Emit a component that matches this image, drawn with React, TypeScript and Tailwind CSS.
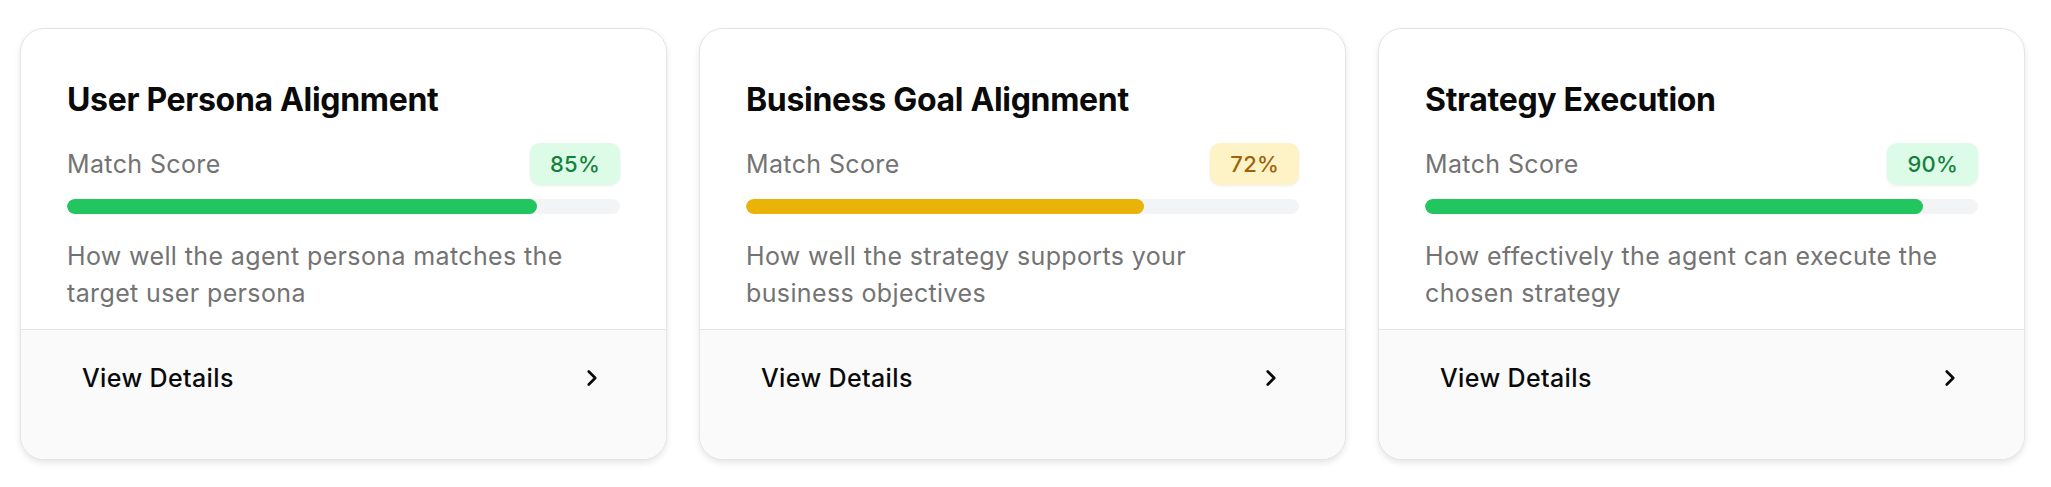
import React from 'react';
import { ChevronRight } from 'lucide-react';

interface Metric {
  title: string;
  score: number;
  description: string;
  tone: 'green' | 'yellow';
}

const metrics: Metric[] = [
  {
    title: 'User Persona Alignment',
    score: 85,
    description: 'How well the agent persona matches the target user persona',
    tone: 'green',
  },
  {
    title: 'Business Goal Alignment',
    score: 72,
    description: 'How well the strategy supports your business objectives',
    tone: 'yellow',
  },
  {
    title: 'Strategy Execution',
    score: 90,
    description: 'How effectively the agent can execute the chosen strategy',
    tone: 'green',
  },
];

const MetricCard: React.FC<{ metric: Metric }> = ({ metric }) => {
  const isGreen = metric.tone === 'green';

  return (
    <div className="w-[647px] h-[432px] flex flex-col bg-white border border-[#e5e5e5] rounded-[24px] overflow-hidden shadow-[0_3px_6px_rgba(0,0,0,0.10)]">
      <div className="px-[46px] pt-[53px] pb-[17px]">
        <h3 className="text-[32px] leading-[36px] font-bold tracking-[-0.01em] text-[#0a0a0a]">
          {metric.title}
        </h3>

        <div className="mt-[25px] flex items-center justify-between">
          <span className="text-[25px] leading-[32px] tracking-[0.015em] text-[#737373]">Match Score</span>
          <span
            className={
              isGreen
                ? 'px-[20px] py-[6px] rounded-[10px] text-[22px] leading-[30px] font-medium tracking-[0.01em] bg-[#dcfce7] text-[#15803d] shadow-[0_1px_3px_rgba(0,0,0,0.08)]'
                : 'px-[20px] py-[6px] rounded-[10px] text-[22px] leading-[30px] font-medium tracking-[0.01em] bg-[#fef3c7] text-[#a16207] shadow-[0_1px_3px_rgba(0,0,0,0.08)]'
            }
          >
            {metric.score}%
          </span>
        </div>

        <div className="mt-[14px] h-[15px] w-full rounded-full bg-[#f3f4f6] overflow-hidden">
          <div
            className={isGreen ? 'h-full rounded-full bg-[#22c55e]' : 'h-full rounded-full bg-[#eab308]'}
            style={{ width: `${metric.score}%` }}
          />
        </div>

        <p className="mt-[24px] text-[25px] leading-[37px] tracking-[0.015em] text-[#737373]">
          {metric.description}
        </p>
      </div>

      <div className="flex-1 border-t border-[#e5e5e5] bg-[#fafafa] px-[46px] pt-[32px]">
        <button className="w-full flex items-center justify-between px-[15px] text-[25px] leading-[32px] font-medium tracking-[0.015em] text-[#0a0a0a]">
          <span>View Details</span>
          <ChevronRight size={26} strokeWidth={2.5} className="text-[#0a0a0a]" />
        </button>
      </div>
    </div>
  );
};

const App: React.FC = () => {
  return (
    <div
      className="min-h-screen bg-white pl-[20px] pt-[28px] flex gap-[32px]"
      style={{ fontFamily: 'Inter, "Noto Sans", sans-serif' }}
    >
      {metrics.map(metric => (
        <MetricCard key={metric.title} metric={metric} />
      ))}
    </div>
  );
};

export default App;
